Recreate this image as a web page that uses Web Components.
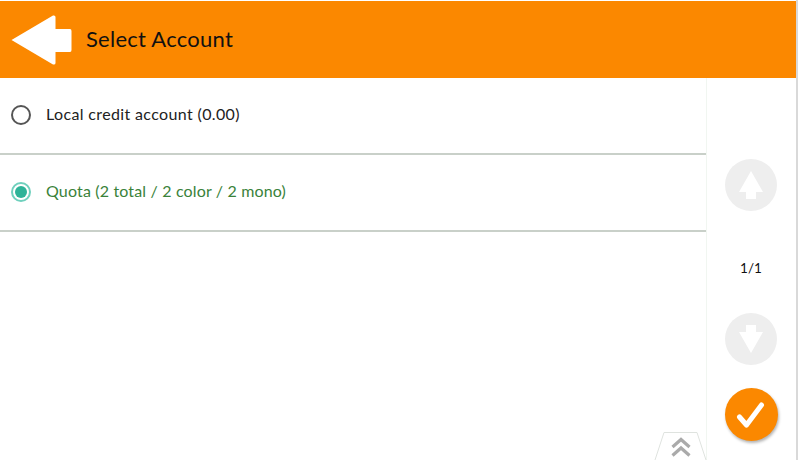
<!DOCTYPE html>
<html><head><meta charset="utf-8"><style>
html,body{margin:0;height:100%;overflow:hidden;background:#fff}
body{font-family:"Lato","Noto Sans",sans-serif}
</style></head><body>
<app-screen>
  <app-header slot="header" title="Select Account"></app-header>
  <account-row slot="list" style="--ls:.36px" label="Local credit account (0.00)"></account-row>
  <account-row slot="list" style="--ls:.16px" checked label="Quota (2 total / 2 color / 2 mono)"></account-row>
  <page-rail slot="rail"></page-rail>
</app-screen>
<script>
function def(name, html, init){
  customElements.define(name, class extends HTMLElement{
    connectedCallback(){
      if(this.shadowRoot) return;
      const r=this.attachShadow({mode:'open'});
      r.innerHTML=html;
      if(init) init(this,r);
    }
  });
}
def('app-screen',`<style>
:host{display:grid;grid-template-rows:77px 1fr;height:460px;box-sizing:border-box;padding-top:1px;position:relative;border-right:2px solid #d9d9d9;width:798px}
.main{display:grid;grid-template-columns:707px 1fr;min-height:0}
.list{position:relative;border-right:1px solid #f1f6f1;display:flex;flex-direction:column}
</style>
<slot name="header"></slot>
<div class="main"><div class="list"><slot name="list"></slot><drawer-tab></drawer-tab></div><slot name="rail"></slot></div>`);
def('app-header',`<style>
:host{display:flex;align-items:center;background:#fb8800;height:77px;padding-left:11px;gap:14px}
svg{width:61px;height:52px;display:block}
h1{margin:0 0 2px;font:400 22px "Lato",sans-serif;color:#111;letter-spacing:.25px}
</style>
<svg viewBox="0 0 61 52"><path d="M0.500 26 L42 1.500 Q44.500 1 44.500 3 V15 H59 Q60.500 15 60.500 17 V36 Q60.500 38 59 38 H44.500 V49 Q44.500 51 42 50.500Z" fill="#fff"/></svg>
<h1></h1>`,(h,r)=>{r.querySelector('h1').textContent=h.getAttribute('title')});
def('account-row',`<style>
:host{display:flex;align-items:center;height:75px;padding-left:11px;border-bottom:2px solid #c9d0c9;font:400 16px "Lato",sans-serif;color:#222;letter-spacing:var(--ls,.25px)}
.i{display:flex;align-items:center;gap:15px;margin-bottom:2px}
.t{margin-bottom:2px}
:host([checked]){color:#3a823a}
.r{width:20px;height:20px;box-sizing:border-box;border-radius:50%;border:2px solid #555;display:flex;align-items:center;justify-content:center}
:host([checked]) .r{border-color:#6fd0bd}
:host([checked]) .r::after{content:"";width:12px;height:12px;border-radius:50%;background:#2eb398}
</style><div class="i"><span class="r"></span><span class="t"></span></div>`,(h,r)=>{r.querySelector('.t').textContent=h.getAttribute('label')});
def('page-rail',`<style>
:host{display:flex;flex-direction:column;align-items:center;padding:81px 1px 0 0;color:#111;font:400 13.500px "Lato",sans-serif}
.n{height:102px;box-sizing:border-box;padding-top:12px;display:flex;align-items:center;justify-content:center}
.c{width:52px;height:52px;border-radius:50%;background:#eee;display:flex;align-items:center;justify-content:center}
svg{display:block}
.ok{margin-top:23px;width:53px;height:53px;background:#fb8800;box-shadow:1px 2px 3px rgba(0,0,0,.3)}
</style>
<div class="c"><svg width="26" height="30" viewBox="0 0 26 30"><path d="M13 1 L25 22 H18 V29 H8 V22 H1Z" fill="#fff"/></svg></div>
<div class="n">1/1</div>
<div class="c"><svg width="26" height="30" viewBox="0 0 26 30"><path d="M13 29 L25 8 H18 V1 H8 V8 H1Z" fill="#fff"/></svg></div>
<div class="c ok"><svg width="30" height="30" viewBox="0 0 30 30"><path d="M3.500 17 L10.500 25 L25.500 5" fill="none" stroke="#fff" stroke-width="5" stroke-linecap="round" stroke-linejoin="round"/></svg></div>`);
def('drawer-tab',`<style>
:host{position:absolute;left:653px;bottom:0;width:54px;height:28px;display:block}
svg{display:block}
</style>
<svg width="54" height="28" viewBox="0 0 54 28"><path d="M2 28 L11 .5 H44 L53 28" fill="none" stroke="#dfe3df"/><path d="M19.500 15 L28 7.500 L36.500 15 M19.500 23.500 L28 16 L36.500 23.500" fill="none" stroke="#aaa" stroke-width="3.200"/></svg>`);
</script>
</body></html>
